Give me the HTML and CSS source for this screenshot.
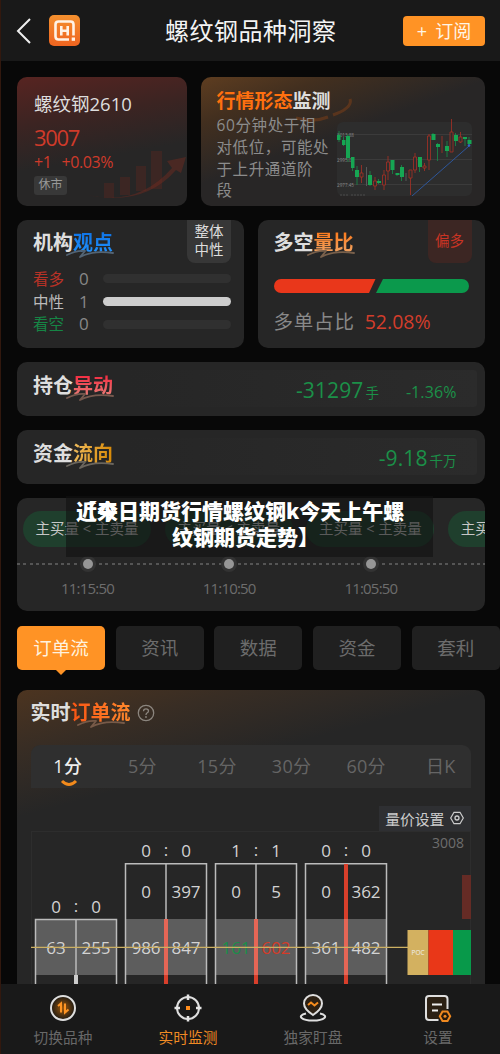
FILE: index.html
```html
<!DOCTYPE html>
<html lang="zh-CN">
<head>
<meta charset="utf-8">
<title>螺纹钢品种洞察</title>
<link rel="stylesheet" href="styles.css">
</head>
<body>
<svg width="0" height="0" class="defs"><defs>
<symbol id="swash" viewBox="0 0 48 10"><path d="M1 6Q11 1 19 2L14 8Q27 1 47 4" fill="none" stroke="currentColor" stroke-width="1.8" stroke-linecap="round" stroke-linejoin="round"/></symbol>
</defs></svg>
<div class="app">
  <header class="header">
    <svg class="back" viewBox="0 0 16 28"><path d="M14 2 2 14 14 26" fill="none" stroke="#eee" stroke-width="2"/></svg>
    <svg class="logo" viewBox="0 0 31 31"><defs><linearGradient id="lg" x1="0" y1="0" x2="0" y2="1"><stop offset="0" stop-color="#f4902e"/><stop offset="1" stop-color="#ef6420"/></linearGradient></defs><rect width="31" height="31" rx="5" fill="url(#lg)"/><path d="M20 24.500H9.500Q6.500 24.500 6.500 21.500V9.500Q6.500 6.500 9.500 6.500H21.500Q24.500 6.500 24.500 9.500V20.500" fill="none" stroke="#fff3e6" stroke-width="2.600"/><path d="M12.300 11V20.500M18.700 11V20.500M12 15.700H19" fill="none" stroke="#fff3e6" stroke-width="2.600"/><rect x="22.700" y="22.500" width="3.300" height="3.300" fill="#fff3e6"/></svg>
    <h1>螺纹钢品种洞察</h1>
    <button class="subscribe"><span>+</span>订阅</button>
  </header>

  <main>
    <section class="row top-row">
      <article class="card quote">
        <svg class="bars" viewBox="0 0 100 56"><g fill="#82291f" fill-opacity=".24"><path d="M17 38h10v15H17zM33 32h10v18H33zM49 21h10v25H49zM64 6h11v38H64z"/></g><path d="M0 50Q51 62 85 23L80 16 99 12 94 28 89 25Q57 62 0 50" fill="#7c2b20" fill-opacity=".42"/></svg>
        <h2>螺纹钢2610</h2>
        <div class="price">3007</div>
        <div class="change"><span>+1</span><span>+0.03%</span></div>
        <span class="closed">休市</span>
      </article>
      <article class="card pattern">
        <svg class="curve" viewBox="0 0 60 30"><path d="M0 21Q17 26 32 20M37 18Q57 11 54 2" fill="none" stroke="#914616" stroke-opacity=".42" stroke-width="3"/></svg>
        <div class="pattern-copy"><h3><b>行情形态</b>监测</h3><p>60分钟处于相<br>对低位，可能处<br>于上升通道阶<br>段</p></div>
        <svg class="mini" viewBox="0 0 137 77">
          <rect x="1" y="3" width="135" height="74" rx="6" fill="#2d2d2d"/>
          <path d="M1 15.500H136M1 40.500H136M1 65.500H136" stroke="#3b3b3b"/>
          <g fill="#8a8a8a" font-size="4.600"><text x="1" y="18">3013.88</text><text x="1" y="43">2995.0</text><text x="1" y="68">2977.45</text></g>
          <path d="M4 76H12M15 76H30" stroke="#4c4c4c" stroke-dasharray="2 1"/>
          <g stroke="#178d49" stroke-width=".8" fill="#16a653"><path d="M3 12V23M7.500 18V27M12 15V43M16.500 39V52M21 47V66M34 52V67M42.500 60V65M56.500 41V55M61 54V57M65.500 46V62M83.500 38V53M97 14V21M101.500 24V42M111 22V38M119.500 14V27M129 18V27M133 18V27"/><path stroke="none" d="M1 16h3.500v5H1zM6 21h3.500v5H6zM10 17h4v22h-4zM15 38h3.500v11H15zM19 51h4v7h-4zM32 56h4v10h-4zM41 62h4v2h-4zM54.500 41h4v10h-4zM59.500 54h4v2h-4zM64 48h4v10h-4zM82 38h4v10h-4zM95.500 15h4v6h-4zM100 25h4v3h-4zM109 27h4v5h-4zM118 16h4v6h-4zM127 18h4v2h-4zM131.500 21h4v4h-4z"/></g>
          <g stroke="#a83024" stroke-width=".8" fill="none"><path d="M25.500 46V54M25.500 58V64M39 58V71M48 51V71M52 37V61M74.500 51V76M79 34V54M88.500 44V52M93 15V51M106 17V34M115.500 0V33M124.500 13V24"/><path fill="#2d2d2d" d="M24 54h3v4h-3zM37.500 62h3v5h-3zM46.500 56h3v10h-3zM50.500 43h3v9h-3zM73 51h3v8h-3zM77.500 38h3v13h-3zM87 47h3v2h-3zM91.500 17h3v24h-3zM114 13h3v20h-3zM123 18h3v5h-3z"/></g>
          <path d="M30.500 48V67M70 54V62" stroke="#585858"/><path d="M76 77 133 27" stroke="#2e579b" stroke-width="1"/><circle cx="133" cy="26.500" r="1.300" fill="#36c"/>
        </svg>
      </article>
    </section>

    <section class="row views-row">
      <article class="card views">
        <h3 class="title">机构<b class="blue">观点</b><svg class="swash" color="#536474"><use href="#swash"/></svg></h3>
        <span class="badge neutral">整体<br>中性</span>
        <div class="view-line red"><b>看多</b><span>0</span><i></i></div>
        <div class="view-line"><b>中性</b><span>1</span><i class="full"></i></div>
        <div class="view-line green"><b>看空</b><span>0</span><i></i></div>
      </article>
      <article class="card ratio">
        <h3 class="title">多空<b class="orange">量比</b><svg class="swash" color="#79604b"><use href="#swash"/></svg></h3>
        <span class="badge long">偏多</span>
        <svg class="ratio-bar" viewBox="0 0 195 14"><path d="M7 0H101.500L95 14H7A7 7 0 0 1 7 0" fill="#e9371b"/><path d="M109 0H188A7 7 0 0 1 188 14H102Z" fill="#0b994c"/></svg>
        <div class="ratio-text">多单占比<b>52.08%</b></div>
      </article>
    </section>

    <section class="card flow-card"><h3 class="title">持仓<b class="crimson">异动</b><svg class="swash" color="#76594e"><use href="#swash"/></svg></h3><div class="strip"><strong>-31297<small>手</small></strong><em>-1.36%</em></div></section>
    <section class="card flow-card"><h3 class="title">资金<b class="gold">流向</b><svg class="swash" color="#6a655d"><use href="#swash"/></svg></h3><div class="strip"><strong>-9.18<small>千万</small></strong></div></section>

    <section class="card timeline">
      <div class="events">
        <div class="event"><span>主买量 &lt; 主卖量</span><i></i><time>11:15:50</time></div>
        <div class="event"><span>主买量 &lt; 主卖量</span><i></i><time>11:10:50</time></div>
        <div class="event"><span>主买量 &lt; 主卖量</span><i></i><time>11:05:50</time></div>
        <div class="event last"><span>主买量 &lt; 主卖量</span></div>
      </div>
    </section>

    <nav class="tabs"><a class="active">订单流</a><a>资讯</a><a>数据</a><a>资金</a><a>套利</a></nav>

    <section class="card orders">
      <h3 class="title">实时<b class="fire">订单流</b><svg class="swash" color="#775a48"><use href="#swash"/></svg><svg class="help" viewBox="0 0 18 18"><circle cx="9" cy="9" r="7.700" fill="none" stroke="#8b857e" stroke-width="1.300"/><path d="M6.500 7.200Q6.500 4.800 9 4.800T11.500 7Q11.500 8.200 10 9Q9 9.600 9 11" fill="none" stroke="#8b857e" stroke-width="1.300"/><circle cx="9" cy="13" r=".9" fill="#8b857e"/></svg></h3>
      <div class="periods"><a class="active">1分<svg viewBox="0 0 18 8"><path d="M2 2Q9 9 16 2" fill="none" stroke="#f28a1c" stroke-width="3"/></svg></a><a>5分</a><a>15分</a><a>30分</a><a>60分</a><a>日K</a></div>
      <div class="settings">量价设置<svg viewBox="0 0 14 14"><path d="M4 1.300h6L13.300 7 10 12.700H4L.7 7Z" fill="none" stroke="#ccc" stroke-width="1.200"/><circle cx="7" cy="7" r="2" fill="none" stroke="#ccc" stroke-width="1.300"/></svg></div>
      <svg class="footprint" viewBox="31 831 440 153">
        <path d="M31 831.500H471M31.500 831V984M470.500 831V984" stroke="#2d2d2d" fill="none"/>
        <g fill="#5d5d5d"><path d="M35 919h82v56H35zM125 919h82v56h-82zM215 919h82v56h-82zM305 919h82v56h-82z"/></g>
        <g fill="none" stroke="#bbb" stroke-width="1.500"><path d="M35.500 984V919.500H116.500V984M125.500 984V863.700H206.500V984M215.500 984V863.700H296.500V984M305.500 984V863.700H386.500V984M76 919V975M166 864V919M256 864V919"/></g>
        <path d="M76 975v9" stroke="#ccc" stroke-width="4"/>
        <path d="M166 919V984M256 919V984M346 864V984" stroke="#d83f2b" stroke-width="4"/><path d="M166 919V975M256 919V975M346 919V975" stroke="#e56656" stroke-width="4"/>
        <g class="numbers"><text x="56" y="913">0</text><text x="76" y="912">:</text><text x="96" y="913">0</text><text x="146" y="857">0</text><text x="166" y="856">:</text><text x="186" y="857">0</text><text x="236" y="857">1</text><text x="256" y="856">:</text><text x="276" y="857">1</text><text x="326" y="857">0</text><text x="346" y="856">:</text><text x="366" y="857">0</text><text x="146" y="898">0</text><text x="186" y="898">397</text><text x="236" y="898">0</text><text x="276" y="898">5</text><text x="326" y="898">0</text><text x="366" y="898">362</text><text x="56" y="954">63</text><text x="96" y="954">255</text><text x="146" y="954">986</text><text x="186" y="954">847</text><text x="236" y="954" fill="#198f49">161</text><text x="276" y="954" fill="#d53b29">602</text><text x="326" y="954">361</text><text x="366" y="954">482</text></g>
        <path d="M31 947.300H408" stroke="#ccb062" stroke-width="1.300"/>
        <path fill="#652b25" d="M462 875h9v44h-9z"/><path fill="#d3b160" d="M407.500 930h21v45h-21z"/><path fill="#e93718" d="M428.500 930H453v45h-24.500z"/><path fill="#08994a" d="M453 930h18v45h-18z"/>
        <text x="411.500" y="955" font-size="6.500" fill="#eee">POC</text><text class="axis" x="432" y="848">3008</text>
      </svg>
    </section>
  </main>

  <nav class="bottom-nav">
    <a><svg viewBox="0 0 28 28"><defs><radialGradient id="glow"><stop stop-color="#a05a0c"/><stop offset="1" stop-color="#1d1913"/></radialGradient></defs><circle cx="14" cy="14" r="12" fill="url(#glow)" stroke="#dedede" stroke-width="2"/><path d="M9 12 12 9.500V18.500M16 9.500V18.500L19.500 15.500" fill="none" stroke="#ff9524" stroke-width="2"/></svg>切换品种</a>
    <a class="active"><svg viewBox="0 0 28 28"><circle cx="14" cy="14" r="11" fill="none" stroke="#dedede" stroke-width="2"/><path d="M14 .5V6M14 22V27.500M.5 14H6M22 14H27.500" stroke="#e5e5e5" stroke-width="2.500"/><rect x="12" y="12" width="4" height="4" fill="#ff8c1b"/></svg>实时监测</a>
    <a><svg viewBox="0 0 28 28"><path d="M14 21Q5 15 5 9.500A9 8.500 0 0 1 23 9.500Q23 15 14 21Z" fill="#2c2013" stroke="#dedede" stroke-width="2"/><path d="M9 11 12 8.500 15.500 11.500 19 8.500" stroke="#f78c1d" stroke-width="2" fill="none"/><path d="M7 19.500C-3 22 3 26.500 14 26.500S31 22 21 19.500" fill="none" stroke="#dedede" stroke-width="2"/></svg>独家盯盘</a>
    <a><svg viewBox="0 0 28 28"><path d="M14.500 26H5Q2 26 2 23V5Q2 2 5 2H20.500Q23.500 2 23.500 5V15" fill="#2b2013" stroke="#dedede" stroke-width="2"/><path d="M8 10.500H18M8 16.500H14" stroke="#eee" stroke-width="2"/><path d="M18.500 17.500h5l2.700 4.700-2.700 4.700h-5l-2.700-4.700Z" fill="#291b0c" stroke="#ef8920" stroke-width="2"/><circle cx="21" cy="22.200" r="1.500" fill="#ef8920"/></svg>设置</a>
  </nav>
  <div class="caption"><span class="ghost">近来</span><p>【今日期货行情螺纹钢k今天上午螺</p><p class="second">纹钢期货走势】</p></div>
</div>
</body>
</html>
```
FILE: styles.css
```css
* { box-sizing: border-box; }
body { margin: 0; background: #080808; color: #ddd; font-family: "Open Sans", "Noto Sans CJK SC", sans-serif; }
h1, h2, h3, p { margin: 0; }
b, em, i { font-weight: inherit; font-style: normal; }
.defs { position: absolute; }
.app { position: relative; width: 500px; height: 1054px; overflow: hidden; border-left: 1px solid #32180e; display: flex; flex-direction: column; }
.header { height: 61px; flex: none; background: #191919; display: flex; align-items: center; padding: 0 15px; }
.back { width: 16px; height: 28px; }
.logo { width: 31px; height: 31px; margin-left: 17px; }
h1 { font-size: 24px; line-height: 30px; font-weight: 400; letter-spacing: .5px; color: #f4f4f4; margin-left: 85px; }
.subscribe { margin-left: auto; width: 82px; height: 30px; border: 0; border-radius: 4px; background: #ff9325; color: #fff5e5; font: 18px/30px "Open Sans", "Noto Sans CJK SC", sans-serif; padding: 0; }
.subscribe span { margin-right: 8px; }
main { flex: 1; min-height: 0; overflow: hidden; padding: 16px 0 0 16px; }
.card { position: relative; background: #262626; border-radius: 10px; overflow: hidden; width: 467.5px; }
.row { display: flex; gap: 13.5px; margin-bottom: 14px; }
.top-row { height: 128.5px; }
.quote { width: 170px; padding: 14px 17px; background: linear-gradient(170deg, #572421 0, #3b2422 32%, #272626 60%); }
.quote h2 { font-size: 18.5px; line-height: 26px; font-weight: 400; }
.price { font-size: 22px; line-height: 26px; margin-top: 7px; color: #cf3a2a; letter-spacing: -1.3px; }
.change { display: flex; gap: 10px; font-size: 16px; line-height: 22px; margin-top: 1px; color: #cf3a2a; letter-spacing: -.4px; }
.closed { display: block; width: 33px; height: 19px; margin-top: 3px; border-radius: 3px; background: #383838; color: #999; font-size: 12px; line-height: 18px; text-align: center; }
.bars { position: absolute; width: 100px; height: 56px; right: 0; bottom: 5px; }
.pattern { width: 284px; display: flex; padding: 11px 0 0 16px; background: linear-gradient(160deg, #5e3d20 0, #422f1f 20%, #282626 46%); }
.curve { position: absolute; width: 60px; height: 30px; left: 95px; top: 20px; }
.pattern-copy { width: 119px; position: relative; flex: none; }
h3 { font-size: 19px; line-height: 27px; font-weight: 700; color: #dedede; white-space: nowrap; }
.pattern-copy b { color: #ff700f; }
.pattern-copy p { font-size: 15.5px; line-height: 21.8px; letter-spacing: .6px; color: #8c8c8c; white-space: nowrap; }
.mini { width: 137px; height: 77px; margin-top: 31px; position: relative; }
.views-row { height: 128px; }
.title { position: relative; font-size: 20px; line-height: 28px; }
.title b { color: transparent; background-clip: text; }
.blue { background-image: linear-gradient(#0d6fe2, #2295ff); }
.orange { background-image: linear-gradient(#ff7410, #edaa70); }
.crimson { background-image: linear-gradient(#f51e38, #e88b80); }
.gold { background-image: linear-gradient(100deg, #f0bd5f, #d58500); }
.fire { background-image: linear-gradient(90deg, #fa5514, #ff892d); }
.swash { position: absolute; left: 33px; top: 20px; width: 48px; height: 10px; }
.views { width: 227px; padding: 9px 13px 0 16px; }
.views .title { margin-bottom: 11px; }
.badge { position: absolute; top: 0; right: 13px; width: 44px; height: 43px; border-radius: 0 0 8px 8px; text-align: center; font-size: 14.5px; line-height: 18.5px; padding-top: 3px; }
.neutral { background: #373737; }
.long { background: #3c2623; color: #c93424; padding-top: 12px; }
.view-line { display: grid; grid-template-columns: 45px 25px 128px; align-items: center; height: 22.7px; font-size: 15.5px; line-height: 22px; color: #bbb; }
.view-line span { font-size: 17px; padding-left: 1px; color: #888; }
.view-line i { height: 9px; border-radius: 5px; background: #303030; }
.view-line .full { background: #cdcdcd; }
.red b { color: #b83226; }
.green b { color: #168545; }
.ratio { width: 227px; padding: 9px 16px; }
.ratio-bar { display: block; width: 195px; height: 14px; margin-top: 22.5px; }
.ratio-text { font-size: 19.5px; line-height: 28px; margin-top: 15px; color: #898989; letter-spacing: .8px; }
.ratio-text b { color: #d33d2b; margin-left: 10px; letter-spacing: 0; }
.flow-card { height: 54px; margin-bottom: 14px; padding: 8px 8px 8px 16px; display: flex; justify-content: space-between; }
.flow-card .title { margin-top: 2px; }
.strip { width: 350px; height: 37px; padding-right: 20px; display: flex; justify-content: flex-end; align-items: baseline; border-radius: 4px; background: linear-gradient(90deg, #262626, #2b2b2b); color: #1b9048; line-height: 41px; }
.strip strong { font-weight: 400; font-size: 21px; letter-spacing: .1px; }
.strip small { font-size: 13.5px; letter-spacing: 0; margin-left: 2px; }
.strip em { font-size: 16px; margin-left: 27px; letter-spacing: .1px; }
.timeline { height: 113.5px; margin-bottom: 15px; padding: 13px 0 0 6px; }
.timeline::before { content: ""; position: absolute; left: 0; right: 0; top: 65px; height: 2px; background: repeating-linear-gradient(90deg, #555 0 3px, transparent 3px 6.3px); }
.events { display: flex; gap: 13.7px; width: 620px; }
.event { position: relative; width: 128px; display: flex; flex-direction: column; align-items: center; }
.event span { width: 128px; height: 36px; border-radius: 18px; background: #1f3f2d; text-align: center; font-size: 14.5px; line-height: 35px; color: #c7c7c7; }
.event i { width: 10px; height: 10px; margin: 12px 0 0 1px; border-radius: 50%; background: #969696; box-shadow: 0 0 0 3px #333; }
.event time { margin: 8px 0 0 1px; font-size: 15px; line-height: 22px; letter-spacing: -.8px; color: #6d6d6d; }
.tabs { display: flex; gap: 10.7px; width: 484px; margin-bottom: 20.5px; }
.tabs a { position: relative; width: 88px; height: 43.5px; flex: none; border-radius: 5px; background: #202020; text-align: center; font-size: 18.5px; line-height: 43px; color: #6c6c6c; }
.tabs .active { background: #ff9325; color: #fff2df; }
.tabs .active::after { content: ""; position: absolute; top: 43px; left: 38px; border: solid transparent; border-width: 6px 6px 0; border-top-color: #ff9325; }
.orders { height: 300px; border-radius: 10px 10px 0 0; padding: 9px 13.5px 0; background: linear-gradient(165deg, #4c3420 0, #382d24 14%, #262626 30%); }
.orders .swash { left: 46px; }
.help { width: 18px; height: 18px; margin-left: 6px; vertical-align: -2px; }
.periods { display: grid; grid-template-columns: repeat(6, 74.6px); width: 440px; height: 43px; margin-top: 17.5px; border-radius: 9px 9px 0 0; background: #2f2f2f; }
.periods a { position: relative; text-align: center; line-height: 43px; font-size: 18px; color: #656565; letter-spacing: .3px; }
.periods .active { color: #eee; font-weight: 500; }
.periods svg { position: absolute; width: 18px; height: 8px; left: 29px; top: 34px; }
.settings { width: 92.5px; height: 25px; margin: 18px 0 0 auto; display: flex; align-items: center; justify-content: center; gap: 6px; background: #2e2f32; color: #ccc; font-size: 14.8px; white-space: nowrap; }
.settings svg { width: 14px; height: 14px; }
.footprint { display: block; width: 440px; height: 153px; }
.numbers { font-size: 17px; text-anchor: middle; fill: #d3d3d3; }
.axis { font-size: 14px; fill: #6d6d6d; }
.bottom-nav { height: 70.5px; flex: none; background: #191919; display: grid; grid-template-columns: repeat(4, 125px); padding-top: 10px; }
.bottom-nav a { display: flex; flex-direction: column; align-items: center; font-size: 14.7px; line-height: 22px; color: #686868; margin-left: -1px; }
.bottom-nav svg { width: 28px; height: 28px; margin-bottom: 4px; }
.bottom-nav .active { color: #f08a24; }
.caption { position: absolute; left: 65px; top: 496px; width: 367px; height: 61px; background: rgba(16, 16, 16, .6); color: #fff; font: 900 21px/26px "Noto Sans CJK SC", sans-serif; padding: 1px 0 0 10px; white-space: nowrap; }
.ghost { position: absolute; left: 10px; top: 1px; }
.second { padding-left: 96px; }
```
